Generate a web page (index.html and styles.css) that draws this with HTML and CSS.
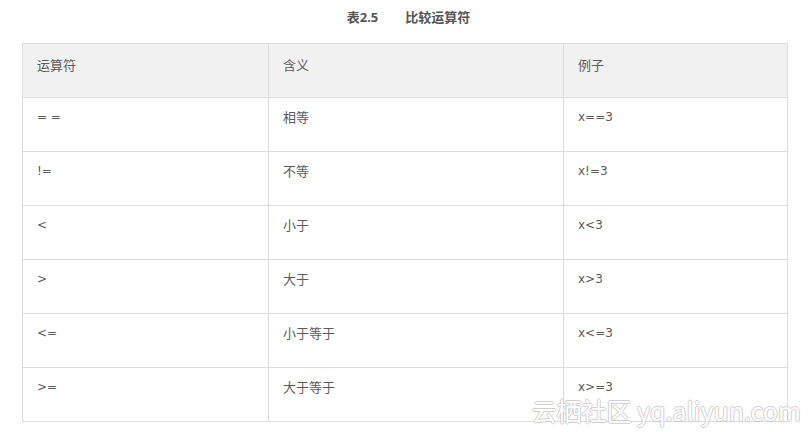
FILE: index.html
```html
<!DOCTYPE html>
<html lang="zh">
<head>
<meta charset="utf-8">
<link rel="stylesheet" href="styles.css">
</head>
<body>
<div class="page">
  <div class="caption"><span class="num">表2.5</span><span class="name">比较运算符</span></div>
  <table class="ops">
    <colgroup><col class="c1"><col class="c2"><col class="c3"></colgroup>
    <thead>
      <tr><th>运算符</th><th>含义</th><th>例子</th></tr>
    </thead>
    <tbody>
      <tr><td class="sym">= =</td><td>相等</td><td class="sym">x==3</td></tr>
      <tr><td class="sym">!=</td><td>不等</td><td class="sym">x!=3</td></tr>
      <tr><td class="sym">&lt;</td><td>小于</td><td class="sym">x&lt;3</td></tr>
      <tr><td class="sym">&gt;</td><td>大于</td><td class="sym">x&gt;3</td></tr>
      <tr><td class="sym">&lt;=</td><td>小于等于</td><td class="sym">x&lt;=3</td></tr>
      <tr><td class="sym">&gt;=</td><td>大于等于</td><td class="sym">x&gt;=3</td></tr>
    </tbody>
  </table>
  <div class="watermark">云栖社区 yq.aliyun.com</div>
</div>
</body>
</html>
```
FILE: styles.css
```css
html, body {
  margin: 0;
  padding: 0;
  background: #fff;
}
body {
  font-family: "Noto Sans", "Noto Sans CJK SC", sans-serif;
  font-size: 13px;
  color: #5a5a5a;
}
.page {
  position: relative;
  width: 811px;
  height: 432px;
  padding: 0 0 0 22px;
  box-sizing: border-box;
  overflow: hidden;
}
.caption {
  height: 43px;
  box-sizing: border-box;
  padding-top: 8px;
  line-height: 18px;
  font-weight: bold;
  color: #555;
  display: flex;
  justify-content: center;
  gap: 27px;
  padding-right: 16px;
}
.ops {
  border-collapse: collapse;
  table-layout: fixed;
  width: 765px;
}
.c1 { width: 246px; }
.c2 { width: 295px; }
.c3 { width: 224px; }
.ops th, .ops td {
  border: 1px solid #dcdcdc;
  height: 54px;
  box-sizing: border-box;
  vertical-align: top;
  text-align: left;
  font-weight: normal;
  line-height: 18px;
  padding: 10px 14px 0;
  color: #5a5a5a;
}
.ops td.sym {
  font-family: "DejaVu Sans", "Noto Sans", sans-serif;
  font-size: 12px;
}
.ops th {
  background: #f1f1f1;
  padding-top: 12px;
}
.watermark {
  position: absolute;
  right: 10px;
  bottom: 8px;
  font-family: "Noto Sans CJK SC", "Noto Sans", sans-serif;
  font-size: 25px;
  line-height: 28px;
  color: #fff;
  text-shadow: 1px 0 0 #c8c8c8, -1px 0 0 #c8c8c8, 0 1px 0 #c8c8c8, 0 -1px 0 #c8c8c8;
  opacity: 0.85;
}
```
